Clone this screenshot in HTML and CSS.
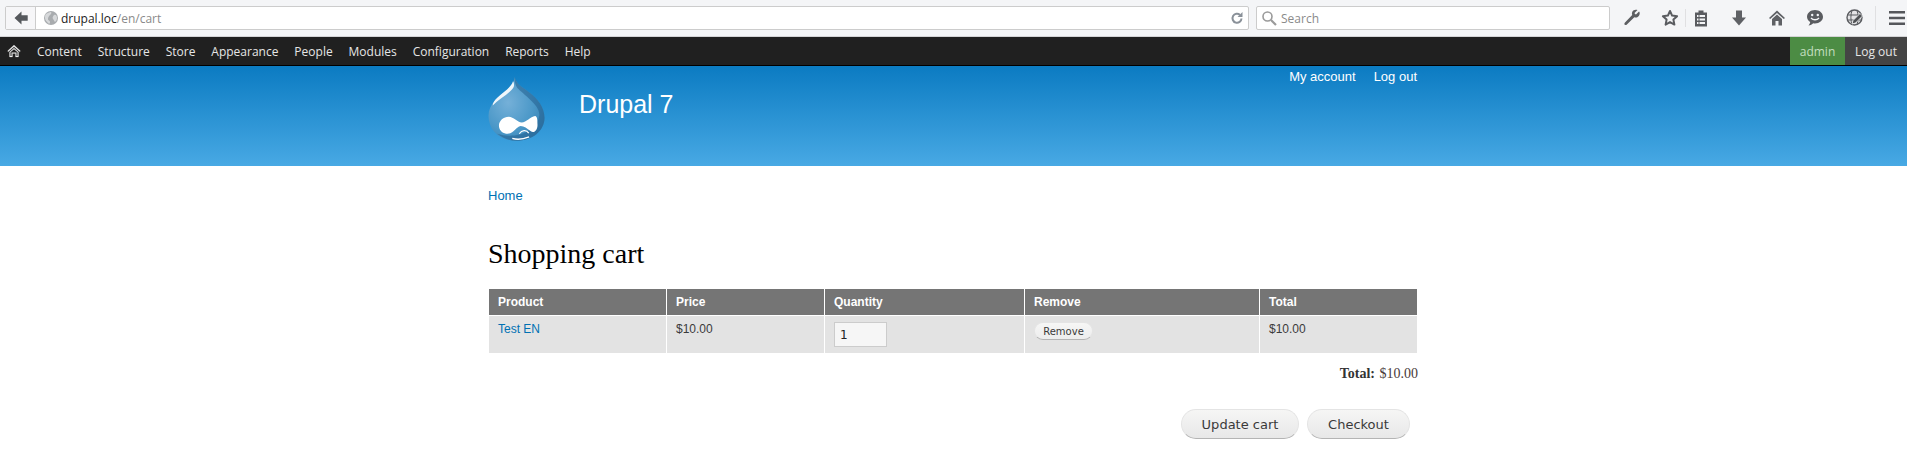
FILE: index.html
```html
<!DOCTYPE html>
<html lang="en">
<head>
<meta charset="utf-8">
<title>Shopping cart | Drupal 7</title>
<link rel="stylesheet" href="styles.css">
</head>
<body>
<div class="chrome">
  <div class="urlbar">
    <span class="back"><svg width="16" height="16" viewBox="0 0 16 16"><path d="M8.500 1.500 1.500 8l7 6.500V10.800h6.200V5.200H8.500z" fill="#55585c"/></svg></span>
    <span class="globe"><svg width="16" height="16" viewBox="0 0 16 16"><circle cx="8" cy="8" r="7" fill="#a8abae"/><path d="M3 4c2-1 3-2 5-2 1 1 0 2-1 3S5 7 5 9s2 1 2 3-1 2-2 1-3-3-3-5 0-3 1-4zm8 1c2-1 3 1 3 3s-1 3-2 4c-1-1-1-2-2-3s0-3 1-4z" fill="#d6d8da"/></svg></span>
    <span class="url"><span class="host">drupal.loc</span>/en/cart</span>
    <span class="reload"><svg width="14" height="14" viewBox="0 0 14 14"><path d="M11.500 7.500a4.500 4.500 0 1 1-1.500-3.600" fill="none" stroke="#8a9199" stroke-width="2"/><path d="M12.500 1v5h-5z" fill="#8a9199"/></svg></span>
  </div>
  <div class="searchbar">
    <svg width="16" height="16" viewBox="0 0 16 16"><circle cx="6.500" cy="6.500" r="4.500" fill="none" stroke="#9a9a9a" stroke-width="1.600"/><path d="m10 10 5 5" stroke="#9a9a9a" stroke-width="2.200"/></svg>
    <span>Search</span>
  </div>
  <div class="tools">
    <svg class="t-wrench" width="18" height="18" viewBox="0 0 18 18"><path d="M16 2.500 13 5.500l-1-.5-.5-1 3-3c-2-.8-4.500 0-5.300 2-.4 1-.4 2 0 3L2 13.500c-1 1-.8 2.500.5 2.500.5 0 1-.2 1.400-.6l7.400-7.100c1 .4 2 .4 3 0 2-.9 2.900-3.300 2.200-5.300z" fill="#5d5f62"/></svg>
    <svg class="t-star" width="18" height="18" viewBox="0 0 18 18"><path d="m9 2 2.100 4.600 5 .6-3.700 3.400 1 5L9 13.100l-4.400 2.500 1-5L1.900 7.200l5-.6z" fill="none" stroke="#5a5c60" stroke-width="2" stroke-linejoin="round"/></svg>
    <span class="t-sep"></span>
    <svg class="t-clip" width="16" height="18" viewBox="0 0 16 18"><path d="M5.500 1.500h5v2H14v14H2v-14h3.500z" fill="#5a5c60"/><path d="M4 6h1.500v2H4zm2.500 0H12v2H6.500zM4 9.500h1.500v2H4zm2.500 0H12v2H6.500zM4 13h1.500v2H4zm2.500 0H12v2H6.500z" fill="#f4f5f7"/></svg>
    <svg class="t-down" width="16" height="18" viewBox="0 0 16 18"><path d="M5 1.500h6v7h4l-7 8-7-8h4z" fill="#5f6165"/></svg>
    <svg class="t-home" width="18" height="18" viewBox="0 0 18 18"><path d="m9 1.500 8 7.500-1.200 1L9 4 2.200 10 1 9zM9 5.500l5 4.500v6.500h-3.500V12h-3v4.500H4V10z" fill="#5f6165"/></svg>
    <svg class="t-chat" width="18" height="18" viewBox="0 0 18 18"><path d="M9 1c4.400 0 8 2.900 8 6.800s-3.600 6.700-8 6.700c-.7 0-1.200 0-1.800-.2-1 1-2.700 2-4.700 2.200.8-.9 1.500-2 1.700-3.400C2.300 12 1 10 1 7.800 1 3.900 4.600 1 9 1z" fill="#5a5c60"/><circle cx="6.200" cy="6" r="1.200" fill="#f4f5f7"/><circle cx="11.800" cy="6" r="1.200" fill="#f4f5f7"/><path d="M5 9c2 2.300 6 2.300 8 0" fill="none" stroke="#f4f5f7" stroke-width="1.300"/></svg>
    <svg class="t-globe" width="18" height="18" viewBox="0 0 18 18"><circle cx="8.500" cy="8.500" r="7.500" fill="#e4e4e6" stroke="#5a5c60" stroke-width="1.400"/><path d="M1 6h15M1 11h15M6 1.500c-1.500 4-1.500 10 0 14M11 1.500c1.500 4 1.500 10 0 14" fill="none" stroke="#5a5c60"/><path d="m6 15 1-3.500 7-7 2.500 2.500-7 7z" fill="#4f5154" stroke="#f4f5f7" stroke-width=".8"/></svg>
    <span class="t-sep t-sep-b"></span>
    <svg class="t-menu" width="18" height="16" viewBox="0 0 18 16"><path d="M1 1h16v2.600H1zm0 5.700h16v2.600H1zm0 5.700h16V15H1z" fill="#55575b"/></svg>
  </div>
</div>
<nav class="adminbar">
  <a class="admin-home" href="#"><svg width="14" height="14" viewBox="0 0 14 14"><path d="M7 1 .5 7l.8.8L7 2.700l5.700 5.100.8-.8zM2.500 8v5h3V9.500h3V13h3V8L7 4z" fill="#eee" stroke="#eee" stroke-width=".2"/><path d="M3.500 8.300V12h1V8.500h5V12h1V8.300L7 5.300z" fill="#202020"/></svg></a>
  <a href="#">Content</a>
  <a href="#">Structure</a>
  <a href="#">Store</a>
  <a href="#">Appearance</a>
  <a href="#">People</a>
  <a href="#">Modules</a>
  <a href="#">Configuration</a>
  <a href="#">Reports</a>
  <a href="#">Help</a>
  <span class="admin-space"></span>
  <a class="admin-user" href="#">admin</a>
  <a class="admin-out" href="#">Log out</a>
</nav>
<header class="site-header">
  <div class="container header-inner">
    <svg class="logo" width="73.500" height="85" viewBox="0 0 210 240" preserveAspectRatio="none">
      <defs>
        <radialGradient id="drop" cx="0.35" cy="0.4" r="0.75"><stop offset="0" stop-color="#75b0d8"/><stop offset="0.6" stop-color="#4b98c8"/><stop offset="1" stop-color="#3580b2"/></radialGradient>
      </defs>
      <path d="M105 20C108 38 125 48 145 62 170 80 190 105 190 135 190 172 155 200 110 200 65 200 30 172 30 130 30 95 60 75 80 58 92 48 102 38 105 20Z" fill="url(#drop)"/>
      <path d="M105 20C108 38 125 48 145 62 170 80 190 105 190 135 190 172 155 200 110 200 90 200 70 192 55 180 100 195 165 180 175 130 180 100 130 70 112 50 106 42 104 30 105 20Z" fill="#235f8e" opacity=".55"/>
      <path d="M100 32C95 50 70 65 55 78 48 85 42 92 42 100 60 80 90 68 102 48 104 42 103 36 100 32Z" fill="#fff" opacity=".9"/>
      <path d="M60 160C58 145 72 132 88 132 102 132 112 148 125 148 138 148 150 132 163 130 170 130 170 145 170 155 170 170 160 180 150 172 140 165 132 158 122 158 108 160 105 178 85 180 72 180 62 172 60 160Z" fill="#fff"/>
      <path d="M118 180C125 170 138 168 145 178" fill="none" stroke="#fff" stroke-width="3.500"/>
      <path d="M98 193C115 198 130 195 146 189" fill="none" stroke="#fff" stroke-width="4"/>
    </svg>
    <a class="site-name" href="#">Drupal 7</a>
    <ul class="secondary">
      <li><a href="#">My account</a></li>
      <li><a href="#">Log out</a></li>
    </ul>
  </div>
</header>
<main class="container main">
  <div class="breadcrumb"><a href="#">Home</a></div>
  <h1>Shopping cart</h1>
  <table class="cart">
    <thead>
      <tr><th class="c1">Product</th><th class="c2">Price</th><th class="c3">Quantity</th><th class="c4">Remove</th><th>Total</th></tr>
    </thead>
    <tbody>
      <tr>
        <td><a href="#">Test EN</a></td>
        <td>$10.00</td>
        <td><input class="qty" type="text" value="1"></td>
        <td><button class="remove" type="button">Remove</button></td>
        <td>$10.00</td>
      </tr>
    </tbody>
  </table>
  <div class="total"><strong>Total:</strong> <span>$10.00</span></div>
  <div class="actions">
    <button class="btn" type="button">Update cart</button>
    <button class="btn" type="button">Checkout</button>
  </div>
</main>
</body>
</html>
```
FILE: styles.css
```css
* { box-sizing: border-box; }
html, body { margin: 0; padding: 0; background: #fff; }
body { font-family: "Liberation Sans", Arial, sans-serif; font-size: 14px; color: #3b3b3b; overflow: hidden; }
a { text-decoration: none; }

.chrome { height: 37px; background: #f4f5f7; border-bottom: 1px solid #d4d4d6; display: flex; align-items: flex-start; padding: 6px 0 0 5px; font-family: "Open Sans", sans-serif; }
.urlbar { width: 1244px; height: 24px; margin-right: 7px; background: #fff; border: 1px solid #ccc; border-radius: 2px; display: flex; align-items: center; font-size: 12px; flex: none; }
.back { width: 30px; height: 22px; border-right: 1px solid #ccc; background: #f6f6f8; display: flex; align-items: center; justify-content: center; }
.globe { display: flex; margin-left: 7px; }
.url { margin-left: 2px; color: #8a8a8a; }
.host { color: #222; }
.reload { margin-left: auto; height: 22px; width: 18px; display: flex; align-items: center; }
.searchbar { width: 354px; height: 24px; background: #fff; border: 1px solid #ccc; border-radius: 2px; display: flex; align-items: center; gap: 4px; padding-left: 4px; color: #8a8a8a; font-size: 12px; flex: none; }
.tools { flex: 1; height: 24px; display: flex; align-items: center; padding-left: 13px; }
.tools svg { flex: none; }
.t-wrench { margin-right: 20px; }
.t-star { margin-right: 6px; }
.t-sep { width: 1px; height: 18px; background: #e0e0e2; margin-right: 7px; flex: none; }
.t-clip { margin-right: 22px; }
.t-down { margin-right: 21px; }
.t-home { margin-right: 20px; }
.t-chat { margin-right: 22px; }
.t-globe { margin-right: 11px; }
.t-sep-b { height: 24px; margin-right: 12px; }

.adminbar { height: 29px; background: #202020; border-bottom: 1px solid #000; display: flex; align-items: stretch; font-family: "Open Sans", sans-serif; font-size: 12px; }
.adminbar a { color: #e6e6e6; padding: 1px 7.96px 0; line-height: 28px; }
.adminbar .admin-home { padding: 0 7px; display: flex; align-items: center; margin-right: 1px; }
.admin-space { flex: 1; }
.adminbar .admin-user { background: #4c8c44; color: #c4dfc0; width: 55px; padding: 1px 0 0; text-align: center; }
.adminbar .admin-out { background: #444; width: 62px; padding: 1px 0 0; text-align: center; }

.site-header { height: 100px; background: linear-gradient(#0b7bc2, #48a9e4); overflow: hidden; }
.container { width: 928px; margin-left: calc(50% - 464.5px); }
.header-inner { display: flex; align-items: flex-start; }
.logo { margin: 4px 0 0 -11.5px; flex: none; }
.site-name { color: #fff; font-size: 25px; line-height: 30px; margin: 23px 0 0 28px; }
.secondary { list-style: none; margin: 3px 0 0 auto; padding: 0; display: flex; gap: 18px; font-size: 13px; line-height: 16px; }
.secondary a { color: #fff; }

.main { padding-top: 22px; }
.breadcrumb { font-size: 13px; line-height: 16px; margin-left: -1px; }
.breadcrumb a, .cart a { color: #0071b3; }
h1 { font-family: "Liberation Serif", serif; font-weight: 400; font-size: 28px; line-height: 36px; color: #000; margin: 32px 0 17px -1px; }

.cart { width: 928px; border-collapse: separate; border-spacing: 0; table-layout: fixed; font-size: 12px; }
.cart th { background: #757575; color: #fff; text-align: left; font-weight: 700; height: 27px; padding: 0 9px 1px; border-right: 1px solid #fff; border-bottom: 1px solid #fff; }
.cart td { background: #e3e3e3; height: 37px; vertical-align: top; padding: 6px 9px 0; border-right: 1px solid #fff; line-height: 15px; color: #3b3b3b; }
.cart th:last-child, .cart td:last-child { border-right: 0; }
.c1 { width: 178px; }
.c2 { width: 158px; }
.c3 { width: 200px; }
.c4 { width: 235px; }
.qty { width: 53px; height: 25px; margin: 0; padding: 0 5px; border: 1px solid #ccc; background: #f6f6f6; color: #222; font: 12px "DejaVu Sans", sans-serif; }
.remove { height: 18px; width: 59px; padding: 0; margin: 0; border: 1px solid #e4e4e4; border-bottom-color: #b4b4b4; border-radius: 10px; background: linear-gradient(#f6f6f5, #ededed); font: 10px "DejaVu Sans", sans-serif; color: #3a3a3a; }

.total { font-family: "Liberation Serif", serif; font-size: 14px; word-spacing: 1px; line-height: 16px; color: #4a3a3a; text-align: right; margin: 13px -1px 0 0; }
.total strong { color: #333; }
.actions { display: flex; justify-content: flex-end; gap: 8px; margin: 27px 7px 0 0; }
.btn { height: 30px; padding: 0; border: 1px solid #e4e4e4; border-bottom-color: #b4b4b4; border-radius: 15px; background: linear-gradient(#f6f6f5, #e8e8e8); font: 13px "DejaVu Sans", sans-serif; color: #3a3a3a; }
.btn:first-child { width: 118px; }
.btn:last-child { width: 103px; }
```
